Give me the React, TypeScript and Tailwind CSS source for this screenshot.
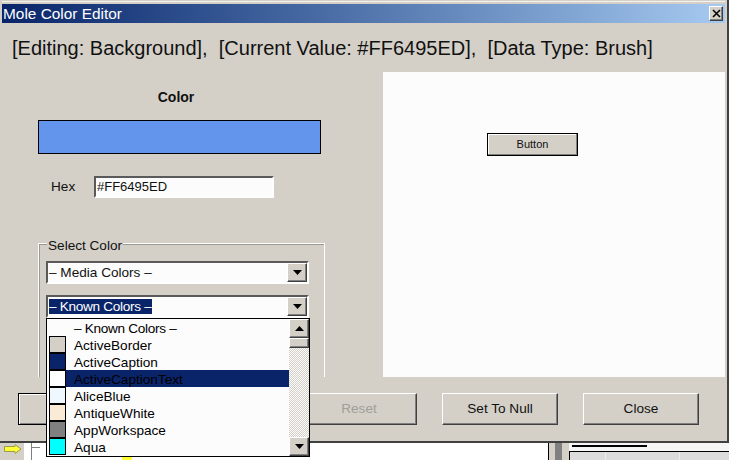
import React from "react";

// --- Win2k style bevels ---

const raised =
  "border border-t-white border-l-white border-r-[#404040] border-b-[#404040] shadow-[inset_-1px_-1px_0_#808080]";
const sunken =
  "border-2 border-t-[#5a5a5a] border-l-[#5a5a5a] border-r-white border-b-white";

const colors = [
  { name: "ActiveBorder", swatch: "bg-[#d4d0c8]" },
  { name: "ActiveCaption", swatch: "bg-[#0a246a]" },
  { name: "ActiveCaptionText", swatch: "bg-white", selected: true },
  { name: "AliceBlue", swatch: "bg-[#f0f8ff]" },
  { name: "AntiqueWhite", swatch: "bg-[#faebd7]" },
  { name: "AppWorkspace", swatch: "bg-[#808080]" },
  { name: "Aqua", swatch: "bg-[#00ffff]" },
];

function Arrow({ up }: { up?: boolean }) {
  return (
    <svg width="9" height="5" viewBox="0 0 9 5" className="block">
      <path d={up ? "M4.5 0 L9 5 L0 5 Z" : "M0 0 L9 0 L4.5 5 Z"} fill="#000" />
    </svg>
  );
}

function Combo({ label, active }: { label: string; active?: boolean }) {
  return (
    <div className={`flex h-[23px] w-[263px] items-center bg-[#fcfcfc] pl-[1px] ${sunken}`}>
      <span className="flex-1 text-[13.6px] leading-[17px] text-[#111]">
        <span className={active ? "bg-[#0a246a] tracking-[-0.3px] text-white" : ""}>{label}</span>
      </span>
      <div className={`flex h-[19px] w-[20px] items-center justify-center bg-[#d4d0c8] ${raised}`}>
        <Arrow />
      </div>
    </div>
  );
}

function DialogButton({ label, disabled, isDefault }: { label?: string; disabled?: boolean; isDefault?: boolean }) {
  return (
    <div
      className={`flex h-[32px] w-[116px] items-center justify-center bg-[#d4d0c8] text-[13.6px] ${
        isDefault
          ? "border border-black shadow-[inset_1px_1px_0_#fff,inset_-1px_-1px_0_#808080]"
          : raised
      } ${disabled ? "text-[#a09e98]" : "text-[#111]"}`}
    >
      {label}
    </div>
  );
}

function ColorList() {
  return (
    <div className="absolute left-[46px] top-[318px] z-10 flex h-[139px] w-[264px] border border-black bg-[#fcfcfc]">
      <div className="flex-1">
        <div className="h-[17px] pl-[27px] text-[13.6px] leading-[19px] tracking-[-0.3px] text-black">– Known Colors –</div>
        {colors.map((c) => (
          <div key={c.name} className="flex h-[17px] items-stretch pl-[2px] text-[13.6px] leading-[19px] text-black">
            <div className={`w-[17px] border border-black ${c.swatch}`} />
            <div className={`flex-1 pl-[8px] ${c.selected ? "bg-[#0a246a]" : ""}`}>{c.name}</div>
          </div>
        ))}
      </div>
      <div className="flex w-[20px] flex-col bg-[repeating-conic-gradient(#d4d0c8_0_25%,#fcfcfc_0_50%)] bg-[length:2px_2px]">
        <div className={`flex h-[19px] items-center justify-center bg-[#d4d0c8] ${raised}`}>
          <Arrow up />
        </div>
        <div className={`h-[10px] bg-[#d4d0c8] ${raised}`} />
        <div className="flex-1" />
        <div className={`flex h-[19px] items-center justify-center bg-[#d4d0c8] ${raised}`}>
          <Arrow />
        </div>
      </div>
    </div>
  );
}

// whatever sits behind the dialog, only the bottom edge shows
function BackgroundStrip() {
  return (
    <div className="flex h-[17px] items-stretch bg-white">
      <div className="w-[24px] bg-[#d4d0c8] pl-[4px] pt-[1px]">
        <svg width="18" height="10" viewBox="0 0 18 10" className="block">
          <path d="M0.5 2.5 H11 V0.5 L17 5 L11 9.5 V7.5 H0.5 Z" fill="#ffff33" stroke="#9a9a50" />
        </svg>
      </div>
      <div className="w-[7px]" />
      <div className="w-[8px] border-l border-[#808080]">
        <div className="mt-[4px] h-px w-[8px] bg-[#808080]" />
      </div>
      <div className="flex flex-1 items-end pl-[83px]">
        <div className="h-[4px] w-[10px] bg-[#ffff33]" />
      </div>
      <div className="w-[1px] bg-black" />
      <div className="w-[6px] bg-[#d4d0c8]" />
      <div className="w-[7px] bg-[#808080]" />
      <div className="w-[7px] bg-[#d4d0c8]" />
      <div className="flex w-[160px] flex-col bg-[#f5f5f5]">
        <div className="h-[8px] pl-[3px] pt-[2px]">
          <div className="h-[2px] w-[75px] bg-black" />
        </div>
        <div className="flex flex-1 border-l border-t border-black bg-[#dcdcdc]">
          <div className="w-[36px] border-r border-[#eeeeee]" />
          <div className="w-[74px] border-r border-[#eeeeee]" />
        </div>
      </div>
    </div>
  );
}

export default function App() {
  return (
    <div className="relative h-[460px] w-[729px] overflow-hidden bg-white font-['Liberation_Sans',Arial,sans-serif]">
      <div className="flex h-[443px] flex-col border-b-2 border-r-2 border-b-[#404040] border-r-[#404040] bg-[#d4d0c8] pl-[2px] pr-[2px]">
        <div className="mt-px h-px bg-[#f4f2ee]" />
        <div className="h-[2px]" />

        {/* title bar */}
        <div className="flex h-[19px] items-center bg-gradient-to-r from-[#0a246a] to-[#a6caf0] pr-[2px]">
          <span className="flex-1 pl-[1px] text-[15.4px] leading-[20px] text-white">Mole Color Editor</span>
          <div className={`flex h-[15px] w-[14px] items-center justify-center bg-[#d4d0c8] ${raised}`}>
            <svg width="9" height="9" viewBox="0 0 9 9">
              <path d="M1 1 L8 8 M8 1 L1 8" stroke="#000" strokeWidth="1.6" />
            </svg>
          </div>
        </div>

        {/* header */}
        <div className="h-[49px] whitespace-pre pl-[10px] pt-[12px] text-[20px] leading-[26px] text-[#111]">
          {"[Editing: Background],  [Current Value: #FF6495ED],  [Data Type: Brush]"}
        </div>

        <div className="flex h-[305px]">
          {/* left column */}
          <div className="flex w-[381px] flex-col pl-[36px]">
            <div className="h-[48px] w-[276px] pt-[18px] text-center text-[14px] font-bold leading-[15px] text-[#111]">
              Color
            </div>
            <div className="h-[34px] w-[283px] border border-black bg-[#6495ed]" />
            <div className="mt-[22px] flex h-[22px] items-center pl-[13px]">
              <span className="w-[43px] text-[13.6px] text-[#111]">Hex</span>
              <div className={`flex h-[22px] w-[180px] items-center bg-[#fcfcfc] pl-[1px] text-[13px] text-[#111] ${sunken}`}>
                #FF6495ED
              </div>
            </div>
            {/* group box */}
            <div className="relative mt-[45px] h-[134px] w-[287px] border border-b-0 border-white px-[7px] pt-[17px] shadow-[inset_1px_1px_0_#9a9890]">
              <span className="absolute -top-[7px] left-[8px] bg-[#d4d0c8] px-[1px] text-[13.6px] leading-[17px] text-[#111]">
                Select Color
              </span>
              <Combo label="– Media Colors –" />
              <div className="mt-[11px]">
                <Combo label="– Known Colors –" active />
              </div>
            </div>
          </div>
          {/* preview */}
          <div className="flex-1 bg-[#fcfcfc] pl-[104px] pt-[61px]">
            <div className="flex h-[23px] w-[91px] items-center justify-center border border-black bg-[#d4d0c8] text-[11px] text-[#111] shadow-[inset_-1px_-1px_0_#808080,inset_1px_1px_0_#fff]">
              Button
            </div>
          </div>
        </div>

        {/* bottom buttons */}
        <div className="flex items-start pl-[16px] pt-[16px]">
          <DialogButton isDefault />
          <div className="w-[167px]" />
          <DialogButton label="Reset" disabled />
          <div className="w-[25px]" />
          <DialogButton label="Set To Null" />
          <div className="w-[25px]" />
          <DialogButton label="Close" />
        </div>
      </div>
      <BackgroundStrip />
      <ColorList />
    </div>
  );
}
